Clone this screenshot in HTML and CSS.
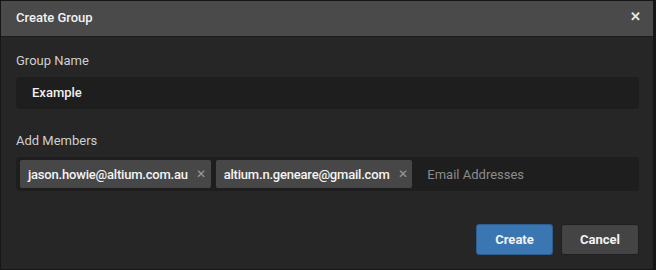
FILE: index.html
```html
<!DOCTYPE html>
<html>
	<head>
		<meta charset="utf-8" />
		<title>Create Group</title>
		<link rel="stylesheet" href="styles.css">
	</head>
	<body>
		<div class="dialog">
			<div class="dialog-head">
				<span class="dialog-title">Create Group</span>
				<span class="dialog-close">&#x2715;</span>
			</div>
			<div class="dialog-body">
				<div class="field-label">Group Name</div>
				<div class="text-input">Example</div>

				<div class="field-label members-label">Add Members</div>
				<div class="tag-input">
					<span class="tag">jason.howie@altium.com.au<span class="tag-x">&#x2715;</span></span>
					<span class="tag">altium.n.geneare@gmail.com<span class="tag-x">&#x2715;</span></span>
					<span class="placeholder">Email Addresses</span>
				</div>

				<div class="actions">
					<button class="btn btn-primary">Create</button>
					<button class="btn">Cancel</button>
				</div>
			</div>
		</div>
	</body>
</html>
```

FILE: styles.css
```css
*{
	padding: 0;
	margin: 0;
	box-sizing: border-box;
}
body{
	background: #262626;
	font-family: Roboto, "Liberation Sans", Arial, sans-serif;
	font-size: 13px;
}
.dialog{
	width: 656px;
	height: 270px;
	border: 1px solid #161616;
	border-right-width: 3px;
	background: #262626;
}
.dialog-head{
	height: 36px;
	background: #4a4a4a;
	border-bottom: 1px solid #1b1b1b;
	display: flex;
	align-items: center;
	justify-content: space-between;
	padding: 0 15px 2px 15px;
}
.dialog-title{
	color: #f2f2f2;
	font-size: 13px;
	font-weight: 500;
}
.dialog-close{
	color: #e6e6e6;
	font-size: 13px;
	font-weight: bold;
	margin-top: -3px;
	margin-right: -3px;
}
.dialog-body{
	padding: 16px 14px 0 15px;
}
.field-label{
	color: #cfcfcf;
	height: 16px;
	line-height: 16px;
	margin-bottom: 8px;
}
.members-label{
	margin-top: 24px;
}
.text-input{
	height: 32px;
	line-height: 32px;
	background: #1e1e1e;
	border-radius: 4px;
	padding-left: 16px;
	color: #f0f0f0;
	font-weight: 500;
}
.tag-input{
	height: 34px;
	background: #1e1e1e;
	border-radius: 4px;
	display: flex;
	align-items: center;
	gap: 5px;
	padding-left: 4px;
}
.tag{
	height: 28px;
	background: #474747;
	border-radius: 2px;
	display: flex;
	align-items: center;
	padding: 0 5px 0 8px;
	color: #f4f4f4;
	font-weight: 500;
	letter-spacing: -0.2px;
}
.tag-x{
	color: #9a9a9a;
	font-size: 12px;
	margin-left: 8px;
}
.placeholder{
	color: #8c8c8c;
	margin-left: 10px;
}
.actions{
	display: flex;
	justify-content: flex-end;
	gap: 8px;
	margin-top: 33px;
}
.btn{
	height: 31px;
	width: 78px;
	border: 1px solid #1f1f1f;
	border-radius: 3px;
	background: #444444;
	color: #f2f2f2;
	font-family: inherit;
	font-size: 13px;
	font-weight: bold;
}
.btn-primary{
	width: 77px;
	background: #3a76b2;
	border-color: #2d5e8e;
}
```
